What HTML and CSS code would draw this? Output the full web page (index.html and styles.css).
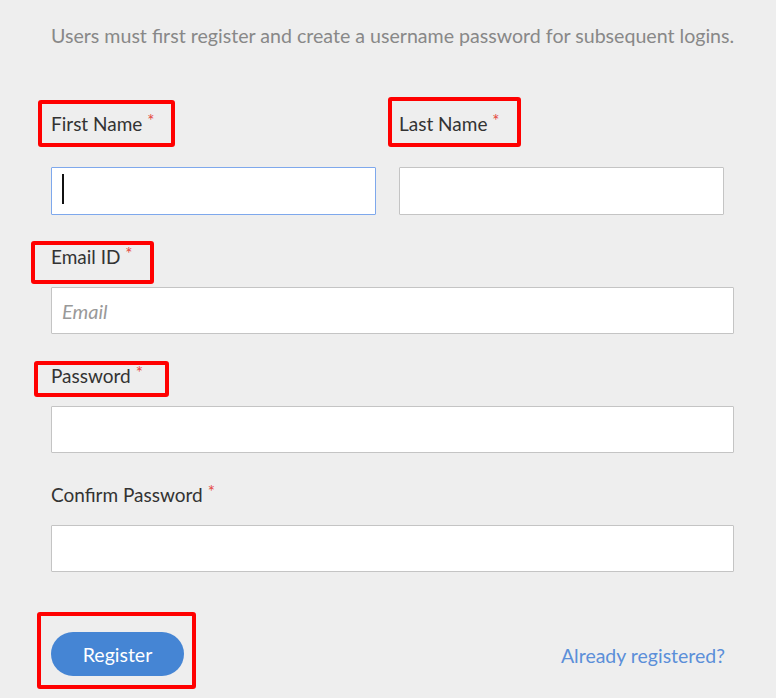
FILE: index.html
```html
<!DOCTYPE html>
<html lang="en">
<head>
    <meta charset="UTF-8">
    <meta name="viewport" content="width=device-width, initial-scale=1.0">
    <title>Register</title>
    <link rel="stylesheet" href="styles.css">
</head>
<body>

<div class="container">
    <p class="intro">Users must first register and create a username password for subsequent logins.</p>

    <form class="register-form">
        <div class="row">
            <div class="field">
                <label class="mark mark-first">First Name <span class="req">*</span></label>
                <input type="text" class="focused">
                <span class="caret"></span>
            </div>
            <div class="field">
                <label class="mark mark-last">Last Name <span class="req">*</span></label>
                <input type="text">
            </div>
        </div>

        <div class="field">
            <label class="mark mark-email">Email ID <span class="req">*</span></label>
            <input type="email" placeholder="Email">
        </div>

        <div class="field">
            <label class="mark mark-pass">Password <span class="req">*</span></label>
            <input type="password">
        </div>

        <div class="field">
            <label>Confirm Password <span class="req">*</span></label>
            <input type="password">
        </div>

        <div class="actions">
            <span class="btn-mark"><button type="button">Register</button></span>
            <a href="#">Already registered?</a>
        </div>
    </form>
</div>

</body>
</html>
```

FILE: styles.css
```css
body {
    font-family: Lato, "Open Sans", sans-serif;
    background-color: #eeeeee;
    margin: 0;
    padding: 0;
    color: #333;
}
.container {
    width: 683px;
    padding: 0 0 0 51px;
}
.intro {
    margin: 24px 0 0 0;
    font-size: 19.6px;
    line-height: 24px;
    color: #888;
    white-space: nowrap;
}
.register-form {
    margin-top: 64px;
}
.row {
    display: grid;
    grid-template-columns: 325px 325px;
    column-gap: 23px;
}
.field {
    display: flex;
    flex-direction: column;
    align-items: flex-start;
    position: relative;
    margin-bottom: 30px;
}
.field label {
    font-size: 19px;
    line-height: 24px;
    margin-bottom: 17px;
}
.row .field label {
    margin-bottom: 30px;
}
.field input {
    width: 100%;
    height: 47px;
    box-sizing: border-box;
    border: 1px solid #c4c4c4;
    border-radius: 1px;
    background: #fff;
    font-family: inherit;
    font-size: 20px;
    padding: 0 10px;
    outline: none;
}
.row .field input {
    height: 48px;
}
.field input.focused {
    border-color: #7ea8ec;
}
.field input::placeholder {
    color: #999;
    font-style: italic;
}
.caret {
    position: absolute;
    left: 11px;
    bottom: 11px;
    width: 2px;
    height: 30px;
    background: #111;
}
.req {
    position: relative;
    top: -4px;
    color: #e5483f;
    font-size: 17px;
}
.mark {
    position: relative;
}
.mark::after {
    content: "";
    position: absolute;
    border: 4px solid #ff0000;
    border-radius: 3px;
}
.mark-first::after { left: -13px; right: -21px; top: -12px; bottom: -10px; }
.mark-last::after { left: -11px; right: -21px; top: -15px; bottom: -10px; }
.mark-email::after { left: -20px; right: -21px; top: -4px; bottom: -14px; }
.mark-pass::after { left: -17px; right: -26px; top: -3px; bottom: -8px; }
.actions {
    display: flex;
    justify-content: space-between;
    align-items: flex-end;
    margin-top: 40px;
    padding-right: 9px;
}
.btn-mark {
    display: block;
    margin-left: -14px;
    padding: 16px 8px 9px 10px;
    border: 4px solid #ff0000;
    border-radius: 3px;
}
.actions button {
    display: block;
    width: 133px;
    height: 44px;
    border: none;
    border-radius: 22px;
    background-color: #4585d4;
    color: #fff;
    font-family: inherit;
    font-size: 19.5px;
    cursor: pointer;
}
.actions a {
    color: #5b8fd9;
    text-decoration: none;
    font-size: 19.5px;
    line-height: 24px;
    margin-bottom: 21px;
}
```
